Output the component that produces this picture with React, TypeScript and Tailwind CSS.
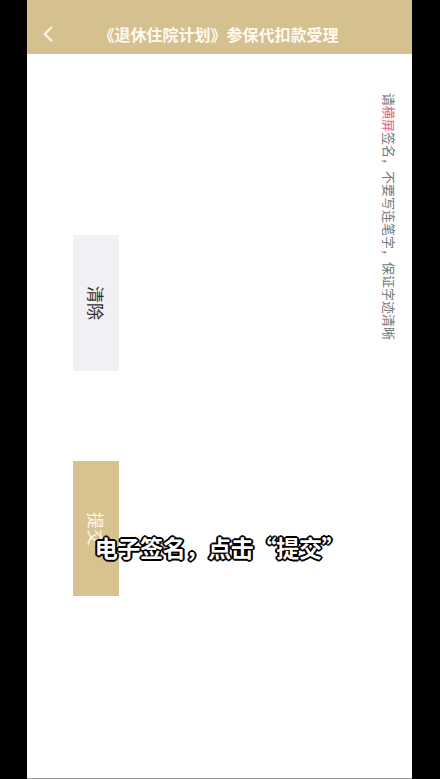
import { ChevronLeft } from 'lucide-react'

const cjk = '"Noto Sans CJK SC", "Noto Sans", sans-serif'

export default function App() {
  return (
    <div className="w-[440px] h-[779px] bg-black flex" style={{ fontFamily: cjk }}>
      <div className="relative ml-[27px] w-[385px] h-full bg-white flex flex-col border-b border-[#9a9a9a]">
        {/* Header */}
        <header className="h-[54px] shrink-0 bg-[#d5c08f] flex items-center pl-[8px] pr-[14px] pt-[14px]">
          <ChevronLeft size={26} strokeWidth={2.2} className="text-[#fbf3e2] shrink-0" />
          <h1 className="flex-1 text-center text-[16px] font-semibold text-[#fefaf0] pr-[22px]">
            《退休住院计划》参保代扣款受理
          </h1>
        </header>

        {/* Signature pad */}
        <div className="flex-1 flex justify-between">
          <div className="pl-[46px] pt-[181px] flex flex-col gap-[90px]">
            <button className="w-[46px] h-[136px] bg-[#f2f0f4] flex items-center justify-center">
              <span className="[writing-mode:vertical-rl] [text-orientation:sideways] text-[17px] text-[#2f2f2f]">
                清除
              </span>
            </button>
            <button className="w-[46px] h-[135px] bg-[#d7c290] flex items-center justify-center">
              <span className="[writing-mode:vertical-rl] [text-orientation:sideways] text-[17px] text-[#fdf7ea]">
                提交
              </span>
            </button>
          </div>

          <div className="pt-[39px] pr-[16px]">
            <p className="[writing-mode:vertical-rl] [text-orientation:sideways] text-[13px] leading-[13px] text-[#777]">
              请<span className="text-[#e0627c]">横屏</span>签名，不要写连笔字，保证字迹清晰
            </p>
          </div>
        </div>

        {/* Video caption overlay */}
        <div
          className="absolute left-0 right-0 top-[530px] text-center text-[23px] font-bold text-white tracking-[-0.3px]"
          style={{
            textShadow:
              '2px 0 0 #000, -2px 0 0 #000, 0 2px 0 #000, 0 -2px 0 #000, 1.4px 1.4px 0 #000, -1.4px -1.4px 0 #000, 1.4px -1.4px 0 #000, -1.4px 1.4px 0 #000',
          }}
        >
          电子签名，点击“提交”
        </div>
      </div>
    </div>
  )
}
